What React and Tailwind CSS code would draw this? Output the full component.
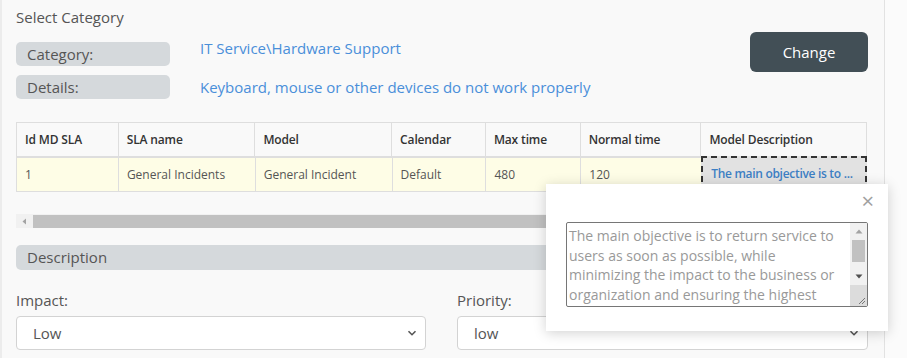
import { useState } from "react";

const cols = [
  { name: "Id MD SLA", w: "w-[101px]" },
  { name: "SLA name", w: "w-[137px]" },
  { name: "Model", w: "w-[137px]" },
  { name: "Calendar", w: "w-[94px]" },
  { name: "Max time", w: "w-[95px]" },
  { name: "Normal time", w: "w-[121px]" },
  { name: "Model Description", w: "w-[166px]" },
];

const row = ["1", "General Incidents", "General Incident", "Default", "480", "120"];

const longText =
  "The main objective is to return service to users as soon as possible, while minimizing the impact to the business or organization and ensuring the highest levels of service quality and availability are maintained.";

function Chevron() {
  return (
    <svg width="10" height="10" viewBox="0 0 10 10" className="text-[#555]">
      <path d="M1.5 3.2 L5 6.7 L8.5 3.2" fill="none" stroke="currentColor" strokeWidth="1.6" />
    </svg>
  );
}

export default function App() {
  const [impact] = useState("Low");
  const [priority] = useState("low");

  return (
    <div className="relative w-[907px] h-[358px] overflow-hidden bg-white flex font-['Open_Sans',sans-serif] text-[#555]">
      {/* Main panel */}
      <div className="w-[885px] h-full bg-[#f9f9f9] border-l-2 border-r border-l-[#ececec] border-r-[#e2e2e2] pl-[14px] pr-[16px]">
        <div className="pt-[6px] text-[15px] leading-[22px] text-[#555]">Select Category</div>

        {/* Category rows + button */}
        <div className="flex mt-[10px]">
          <div className="flex-1">
            <div className="flex items-start">
              <div className="w-[154px] h-[24px] mt-[4px] rounded-[5px] bg-[#d5d9dc] pl-[11px] text-[15px] leading-[24px] text-[#555]">
                Category:
              </div>
              <div className="ml-[30px] text-[15px] leading-[20px] text-[#4a8fd9]">IT Service\Hardware Support</div>
            </div>
            <div className="flex items-center mt-[9px]">
              <div className="w-[154px] h-[24px] rounded-[5px] bg-[#d5d9dc] pl-[11px] text-[15px] leading-[24px] text-[#555]">
                Details:
              </div>
              <div className="ml-[30px] text-[15px] leading-[20px] text-[#4a8fd9]">
                Keyboard, mouse or other devices do not work properly
              </div>
            </div>
          </div>
          <button className="w-[118px] h-[40px] -mt-[6px] rounded-[6px] bg-[#424f56] text-white text-[15px] leading-[20px]">
            Change
          </button>
        </div>

        {/* Table */}
        <div className="mt-[23px] w-[851px]">
          <div className="flex h-[36px] border border-[#dedede] border-b-2 bg-[#f9f9f9]">
            {cols.map((c, i) => (
              <div
                key={c.name}
                className={`${c.w} ${i > 0 ? "border-l border-[#dedede]" : ""} px-[8px] flex items-center text-[12px] font-semibold tracking-[-0.15px] text-[#333]`}
              >
                {c.name}
              </div>
            ))}
          </div>
          <div className="flex h-[34px] border border-t-0 border-[#dedede] bg-[#fefde6]">
            {row.map((v, i) => (
              <div
                key={i}
                className={`${cols[i].w} ${i > 0 ? "border-l border-[#dedede]" : ""} px-[8px] flex items-center text-[12px] text-[#555]`}
              >
                {v}
              </div>
            ))}
            <div className="w-[166px] -mt-[2px] -mr-[1px] h-[36px] border-2 border-dashed border-[#333] bg-[#e2e2e2] px-[8px] flex items-center text-[12px] font-semibold tracking-[-0.3px] text-[#3d7fc4] whitespace-nowrap overflow-hidden">
              The main objective is to ...
            </div>
          </div>
        </div>

        {/* Horizontal scrollbar */}
        <div className="mt-[22px] w-[851px] h-[14px] bg-[#f1f1f1] flex items-center">
          <div className="w-[17px] flex justify-center">
            <svg width="5" height="7" viewBox="0 0 5 7">
              <path d="M4 0.5 L0.5 3.5 L4 6.5 Z" fill="#a3a3a3" />
            </svg>
          </div>
          <div className="h-[13px] w-[800px] bg-[#c1c1c1]" />
        </div>

        {/* Description */}
        <div className="mt-[17px] w-[852px] h-[25px] rounded-[5px] bg-[#d5d9dc] pl-[11px] text-[15px] leading-[25px] text-[#555]">
          Description
        </div>

        {/* Impact / Priority */}
        <div className="mt-[19px] flex gap-[31px] w-[852px]">
          <div className="w-[410px]">
            <div className="text-[15px] leading-[22px] text-[#555]">Impact:</div>
            <div className="mt-[5px] h-[34px] bg-white border border-[#d3d3d3] rounded-[4px] pl-[16px] pr-[8px] flex items-center justify-between text-[15px] text-[#555]">
              <span>{impact}</span>
              <Chevron />
            </div>
          </div>
          <div className="w-[411px]">
            <div className="text-[15px] leading-[22px] text-[#555]">Priority:</div>
            <div className="mt-[5px] h-[34px] bg-white border border-[#d3d3d3] rounded-[4px] pl-[16px] pr-[8px] flex items-center justify-between text-[15px] text-[#555]">
              <span>{priority}</span>
              <Chevron />
            </div>
          </div>
        </div>
      </div>
      <div className="flex-1 bg-[#fbfbfb]" />

      {/* Popover */}
      <div className="absolute left-[546px] top-[184px] w-[342px] h-[147px] bg-white shadow-[0_2px_12px_rgba(0,0,0,0.18)] pl-[20px] pr-[20px]">
        <div className="h-[38px] flex items-start justify-end pt-[5px] -mr-[6px]">
          <span className="text-[#a0a0a0] text-[22px] leading-[22px]">×</span>
        </div>
        <div className="relative w-[302px] h-[85px] border border-[#767676] rounded-[2px] bg-white overflow-hidden">
          <textarea
            readOnly
            defaultValue={longText}
            className="block w-full h-full pl-[2px] pr-[19px] pt-[3px] pb-0 text-[14px] leading-[19.5px] text-[#999] resize-none overflow-hidden outline-none bg-transparent"
          />
          {/* vertical scrollbar */}
          <div className="absolute right-0 top-0 w-[17px] h-full bg-[#f1f1f1] flex flex-col items-center">
            <div className="h-[17px] flex items-center justify-center">
              <svg width="8" height="5" viewBox="0 0 8 5">
                <path d="M0.5 4.5 L4 0.5 L7.5 4.5 Z" fill="#a3a3a3" />
              </svg>
            </div>
            <div className="w-[13px] h-[22px] bg-[#c1c1c1]" />
            <div className="h-[17px] mt-[6px] flex items-center justify-center">
              <svg width="8" height="5" viewBox="0 0 8 5">
                <path d="M0.5 0.5 L4 4.5 L7.5 0.5 Z" fill="#505050" />
              </svg>
            </div>
            <div className="flex-1 w-full bg-[#dcdcdc] relative">
              <svg width="9" height="9" viewBox="0 0 9 9" className="absolute right-[1px] bottom-[1px]">
                <path d="M8 2 L2 8 M8 5 L5 8" stroke="#777" strokeWidth="1" />
              </svg>
            </div>
          </div>
        </div>
      </div>
    </div>
  );
}
